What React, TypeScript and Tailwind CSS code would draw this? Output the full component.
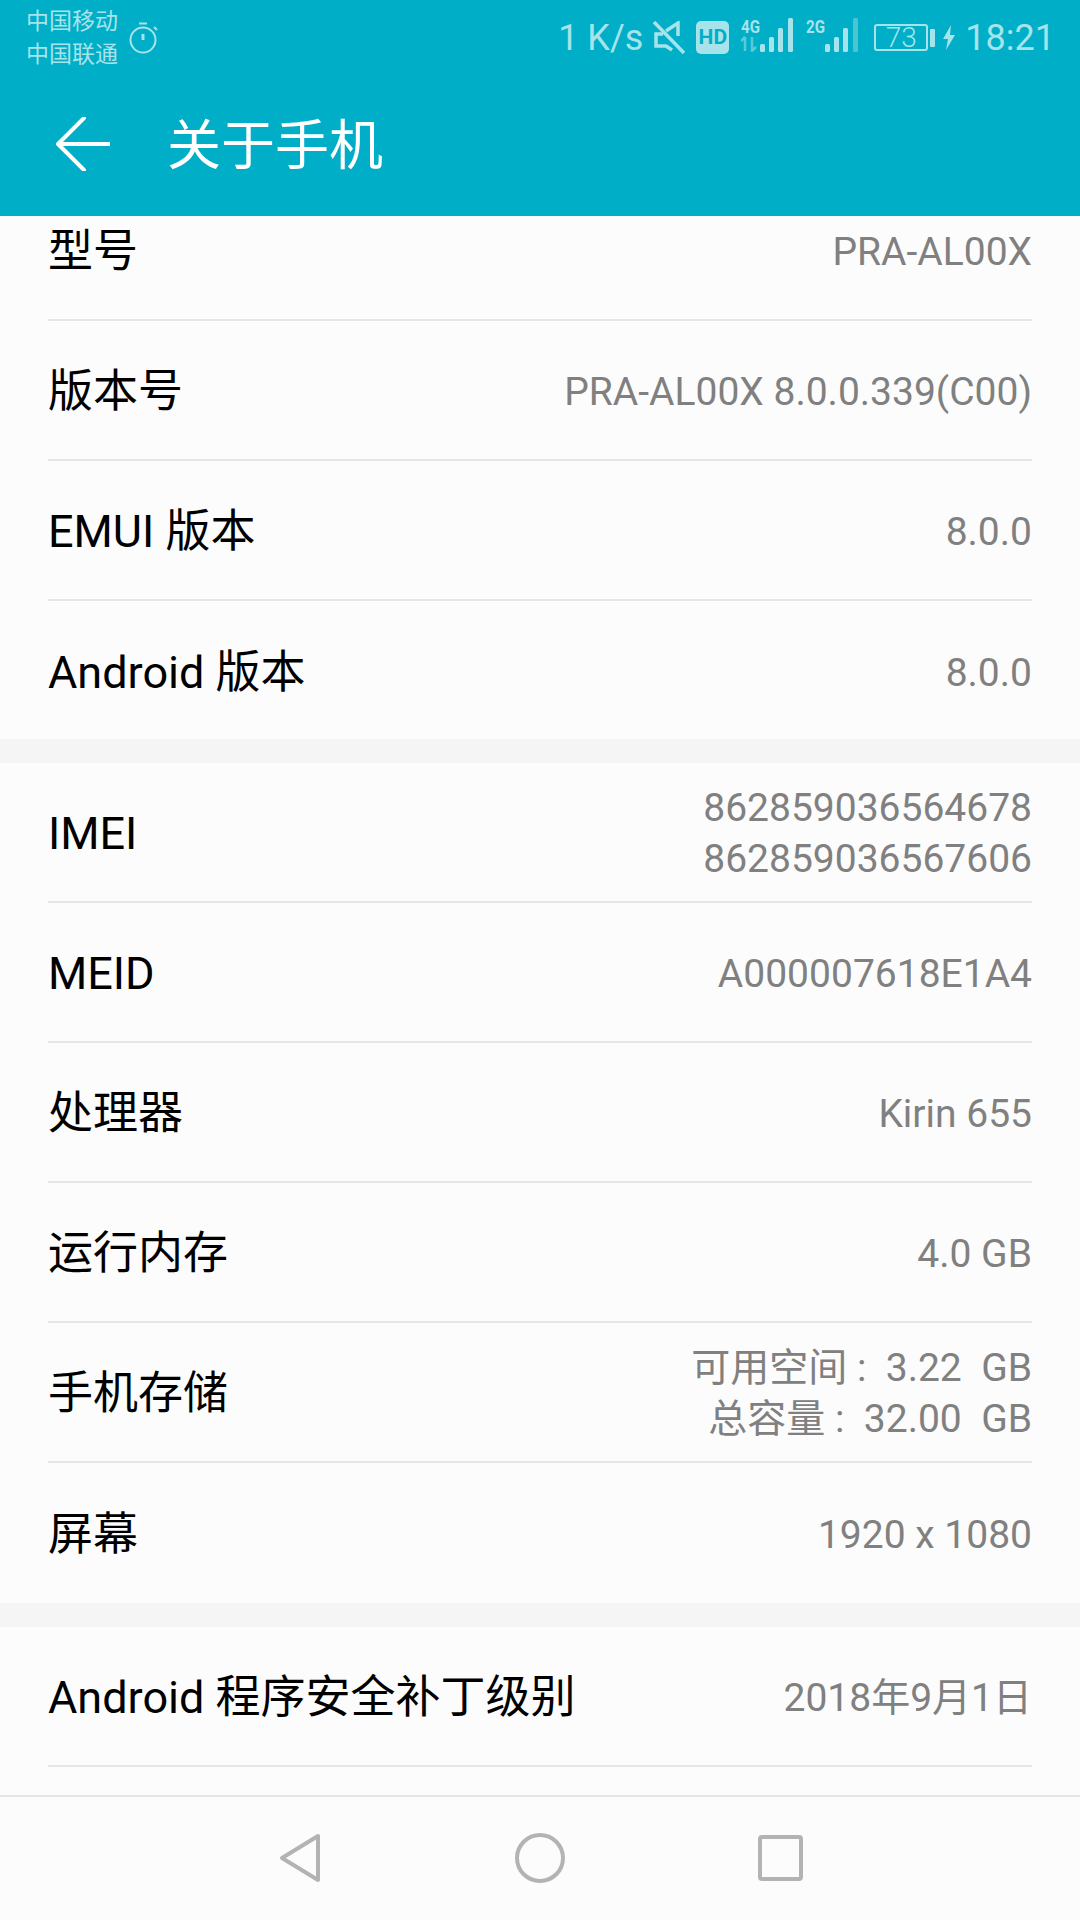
const CJK = "font-['Roboto','Noto_Sans_CJK_SC',sans-serif]";

interface RowData {
  label: string;
  value: string[];
}

const group1: RowData[] = [
  { label: "型号", value: ["PRA-AL00X"] },
  { label: "版本号", value: ["PRA-AL00X 8.0.0.339(C00)"] },
  { label: "EMUI 版本", value: ["8.0.0"] },
  { label: "Android 版本", value: ["8.0.0"] },
];

const group2: RowData[] = [
  { label: "IMEI", value: ["862859036564678", "862859036567606"] },
  { label: "MEID", value: ["A000007618E1A4"] },
  { label: "处理器", value: ["Kirin 655"] },
  { label: "运行内存", value: ["4.0 GB"] },
  { label: "手机存储", value: ["可用空间 :  3.22  GB", "总容量 :  32.00  GB"] },
  { label: "屏幕", value: ["1920 x 1080"] },
];

function Row({ label, value, last }: RowData & { last?: boolean }) {
  return (
    <div className={`mx-[48px] flex h-[140px] items-center justify-between pt-[2px] ${last ? "" : "border-b-2 border-[#e6e6e6]"}`}>
      <span className="text-[45px] leading-none text-black">{label}</span>
      <div className="mt-[2px] whitespace-pre text-right text-[39px] leading-[51px] text-[#808080]">
        {value.map((line) => (
          <div key={line}>{line}</div>
        ))}
      </div>
    </div>
  );
}

function SignalBars({ label, faded }: { label: string; faded?: boolean }) {
  return (
    <svg className="-mt-[9px]" width="52" height="38" viewBox="0 0 52 38" fill="#a6e3ea">
      <text x="0" y="19" fontSize="19" fontWeight="700" fontFamily="Roboto, sans-serif" textLength="19" lengthAdjust="spacingAndGlyphs">
        {label}
      </text>
      {faded ? <path d="M4 37V23M0 27l4-4M11 23v14l4-4" stroke="#5cc9d6" strokeWidth="2.5" fill="none" /> : null}
      <rect x="19" y="30" width="5" height="8" rx="1.5" />
      <rect x="28" y="23" width="5" height="15" rx="1.5" />
      <rect x="37" y="14" width="5" height="24" rx="1.5" />
      <rect x="47" y="4" width="5" height="34" rx="1.5" fill={faded ? "#a6e3ea" : "#4cc4d2"} />
    </svg>
  );
}

function StatusBar() {
  return (
    <div className="flex h-[75px] items-center justify-between pl-[26px] pr-[25px] text-[#a6e3ea]">
      <div className="flex items-center gap-[11px]">
        <div className="text-[23px] leading-[33px]">
          <div>中国移动</div>
          <div>中国联通</div>
        </div>
        <svg width="30" height="32" viewBox="0 0 30 32" fill="none" stroke="#a6e3ea" strokeWidth="2">
          <circle cx="14" cy="18" r="12.5" />
          <path d="M10 1.5h8M25 5l3 3" />
          <path d="M14 12v6" strokeWidth="3" />
        </svg>
      </div>
      <div className="flex items-center">
        <span className="text-[36px] leading-none">1 K/s</span>
        <svg className="ml-[10px]" width="32" height="34" viewBox="0 0 32 34" fill="none" stroke="#a6e3ea" strokeWidth="3.5">
          <path d="M1 1l30 31" />
          <path d="M10 13H3v12h10l6 4M13 10l12-8v13" />
        </svg>
        <div className="ml-[11px] flex h-[33px] w-[33px] items-center justify-center rounded-[5px] bg-[#a6e3ea] text-[21px] font-bold leading-none text-[#00aec7]">
          HD
        </div>
        <div className="ml-[12px] flex">
          <SignalBars label="4G" faded />
        </div>
        <div className="ml-[13px] flex">
          <SignalBars label="2G" />
        </div>
        <div className="ml-[16px] flex h-[27px] w-[54px] items-center justify-center rounded-[3px] border-2 border-[#a6e3ea] text-[28px] font-light leading-none">
          73
        </div>
        <div className="ml-[2px] h-[18px] w-[5px] rounded-[1px] bg-[#a6e3ea]" />
        <svg className="ml-[8px]" width="12" height="25" viewBox="0 0 12 25" fill="#a6e3ea">
          <path d="M8 0L0 14h5l-2 11 9-15H7z" />
        </svg>
        <span className="ml-[10px] text-[36px] leading-none">18:21</span>
      </div>
    </div>
  );
}

export default function App() {
  return (
    <div className={`flex h-[1920px] w-[1080px] flex-col overflow-hidden bg-[#fcfcfc] ${CJK}`}>
      <header className="h-[216px] shrink-0 bg-[#00aec7]">
        <StatusBar />
        <div className="flex h-[141px] items-center pl-[56px] pt-[2px]">
          <svg className="mb-[6px]" width="54" height="54" viewBox="0 0 54 54" fill="none" stroke="#fff" strokeWidth="4" strokeLinecap="round" strokeLinejoin="round">
            <path d="M53 27H2M28 1L2 27l26 26" />
          </svg>
          <h1 className="ml-[57px] text-[54px] font-normal leading-none text-white">关于手机</h1>
        </div>
      </header>

      <main className="min-h-0 flex-1 overflow-hidden">
        <div className="-mt-[35px]">
          {group1.map((row, i) => (
            <Row key={row.label} {...row} last={i === group1.length - 1} />
          ))}
        </div>
        <div className="-mt-[2px] h-[24px] bg-[#f5f5f5]" />
        {group2.map((row, i) => (
          <Row key={row.label} {...row} last={i === group2.length - 1} />
        ))}
        <div className="h-[24px] bg-[#f5f5f5]" />
        <Row label="Android 程序安全补丁级别" value={["2018年9月1日"]} />
      </main>

      <nav className="flex h-[125px] shrink-0 items-center justify-center border-t-2 border-[#e6e6e6] pb-[1px]">
        <div className="flex w-[240px] justify-center">
          <svg width="42" height="50" viewBox="0 0 42 50" fill="none" stroke="#b3b3b3" strokeWidth="4" strokeLinejoin="round">
            <path d="M39 3L3 25l36 22z" />
          </svg>
        </div>
        <div className="flex w-[240px] justify-center">
          <svg width="50" height="50" viewBox="0 0 50 50" fill="none" stroke="#b3b3b3" strokeWidth="4">
            <circle cx="25" cy="25" r="23" />
          </svg>
        </div>
        <div className="flex w-[240px] justify-center">
          <svg width="45" height="46" viewBox="0 0 45 46" fill="none" stroke="#b3b3b3" strokeWidth="4" strokeLinejoin="round">
            <rect x="2" y="2" width="41" height="42" rx="2" />
          </svg>
        </div>
      </nav>
    </div>
  );
}
